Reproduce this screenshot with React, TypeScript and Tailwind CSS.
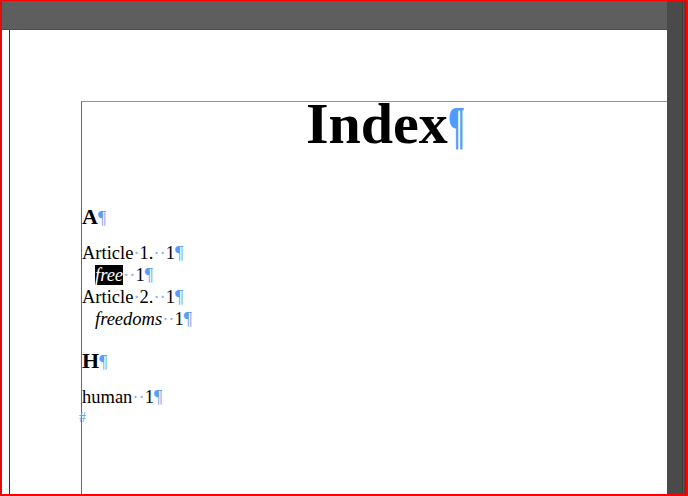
const blue = 'text-[#5a9cf8]'

function Dot({ n = 1 }: { n?: number }) {
  return <span className="text-[#8ab6f0]">{'·'.repeat(n)}</span>
}

function Pilcrow() {
  return <span className={blue}>¶</span>
}

interface EntryProps {
  label: string
  page: string
  sub?: boolean
  highlight?: boolean
}

function Entry({ label, page, sub, highlight }: EntryProps) {
  const words = label.split(' ')
  return (
    <div className={`h-[22px] whitespace-nowrap text-[18.5px] leading-[22px] text-black ${sub ? 'pl-[13px]' : ''}`}>
      {sub ? (
        <span className={`italic ${highlight ? 'bg-black text-white' : ''}`}>{label}</span>
      ) : (
        words.map((w, i) => (
          <span key={i}>
            {i > 0 && <Dot />}
            {w}
          </span>
        ))
      )}
      <Dot n={2} />
      {page}
      <Pilcrow />
    </div>
  )
}

function Heading({ letter }: { letter: string }) {
  return (
    <div className="h-[26px] whitespace-nowrap text-[22px] leading-[26px] font-bold text-black">
      {letter}
      <span className={`${blue} text-[18px] font-normal`}>¶</span>
    </div>
  )
}

export default function App() {
  return (
    <div className="flex h-[496px] w-[688px] border-b-2 border-l-2 border-r-2 border-t border-[#ff0000] bg-white font-['Liberation_Serif',serif]">
      <div className="flex w-[665px] flex-col">
        <div className="h-[29px] shrink-0 border-b border-[#4c4c4c] bg-[#5e5e5e]" />
        <div className="flex flex-1 pl-[7px]">
          <div className="flex flex-1 flex-col border-l border-[#333333] pl-[71px] pt-[71px]">
            <div className="flex-1 border-l border-t border-l-[#9a38e6] border-t-[#e35ce8]">
              <div className="h-[43px] whitespace-nowrap pl-[224px] text-[58px] leading-[43px] font-bold text-black">
                Index
                <span className="inline-block origin-left scale-x-[0.6] text-[52px] text-[#4f9bff]">¶</span>
              </div>
              <div className="mt-[59px]">
                <Heading letter="A" />
              </div>
              <div className="mt-[12px]">
                <Entry label="Article 1." page="1" />
                <Entry label="free" page="1" sub highlight />
                <Entry label="Article 2." page="1" />
                <Entry label="freedoms" page="1" sub />
              </div>
              <div className="mt-[18px]">
                <Heading letter="H" />
              </div>
              <div className="mt-[12px]">
                <Entry label="human" page="1" />
              </div>
              <div className={`-ml-[3px] mt-[3px] h-[14px] text-[14px] leading-[14px] ${blue}`}>#</div>
            </div>
          </div>
        </div>
      </div>
      <div className="flex w-[19px] shrink-0">
        <div className="w-[15px] bg-[#4a4a4a]" />
        <div className="w-px bg-[#3a3a3a]" />
        <div className="w-px bg-[#585858]" />
        <div className="w-[2px] bg-[#434343]" />
      </div>
    </div>
  )
}
